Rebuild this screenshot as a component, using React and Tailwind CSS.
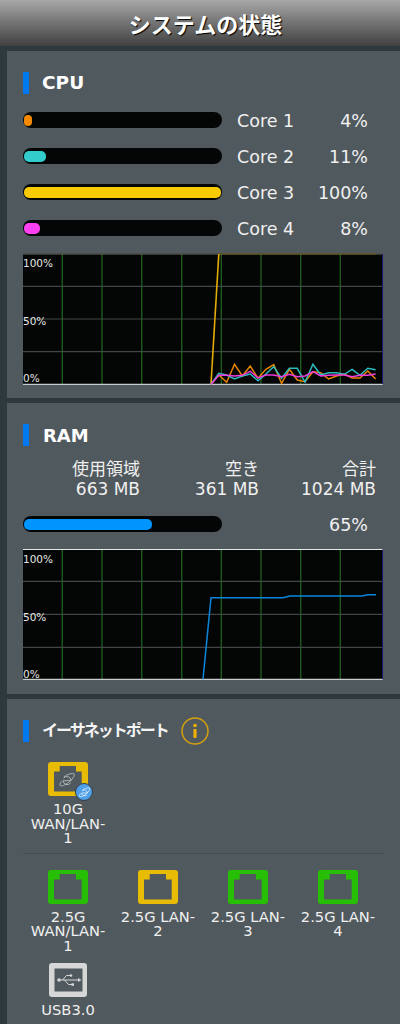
const FONT = 'font-["DejaVu_Sans","Noto_Sans_CJK_JP",sans-serif]';

const cores = [
  { name: "Core 1", pct: "4%", fill: "w-[8px] bg-[#f58a00]" },
  { name: "Core 2", pct: "11%", fill: "w-[22px] bg-[#33cccc]" },
  { name: "Core 3", pct: "100%", fill: "w-[197px] bg-[#f9cb05]" },
  { name: "Core 4", pct: "8%", fill: "w-[16px] bg-[#ff40f0]" },
];

const toPoints = (vals) =>
  vals.map((v, i) => `${188 + i * 7.84},${(v / 3 - 3).toFixed(1)}`).join(" ");

const orange = [403, 375, 397, 343, 378, 348, 385, 358, 344, 400, 358, 390, 395, 365, 368, 387, 378, 372, 384, 384, 363, 387];
const teal = [403, 370, 375, 387, 378, 372, 392, 372, 350, 385, 355, 355, 396, 343, 375, 368, 368, 373, 358, 376, 355, 359];
const magenta = [403, 376, 376, 378, 376, 364, 384, 375, 375, 380, 373, 380, 378, 365, 378, 376, 375, 375, 380, 376, 376, 372];

function Chart({ children, top, lines, topY, bottomY, labelY }) {
  const vx = [39.3, 79, 118.7, 158.7, 198.3, 238, 277.7, 317.3];
  return (
    <svg viewBox="0 0 360 132" className="mt-[17px] block h-[132px] w-[360px]">
      <rect x="0" y={topY - 0.5} width="360" height={bottomY - topY + 0.5} fill="#030605" />
      {vx.map((x) => (
        <line key={x} x1={x} x2={x} y1={topY} y2={bottomY} stroke="#1f5a1c" strokeWidth="1.400" />
      ))}
      {lines.map((y) => (
        <line key={y} x1="0" x2="360" y1={y} y2={y} stroke="#424644" strokeWidth="1.200" />
      ))}
      <line x1="0" x2="360" y1={topY} y2={topY} stroke={top} strokeWidth="1.200" />
      <line x1="0" x2="360" y1={bottomY} y2={bottomY} stroke="#c9cccc" strokeWidth="1.200" />
      <line x1="359.500" x2="359.500" y1={topY} y2={bottomY} stroke="#17176b" strokeWidth="1" />
      {children}
      <g fill="#e6e6e6" fontSize="10.500" fontFamily="'DejaVu Sans', sans-serif">
        <text x="0" y={labelY[0]}>100%</text>
        <text x="0" y={labelY[1]}>50%</text>
        <text x="0" y={labelY[2]}>0%</text>
      </g>
    </svg>
  );
}

function Heading({ children, className }) {
  return (
    <div className="flex h-[22px] items-center">
      <div className="h-[22px] w-[6px] bg-[#0078f0]" />
      <div className={className}>{children}</div>
    </div>
  );
}

function Track({ fill }) {
  return (
    <div className="flex h-4 w-[199px] items-center rounded-full bg-[#030605] pl-px">
      <div className={`h-[11px] rounded-[5px] ${fill}`} />
    </div>
  );
}

function Globe({ color, size }) {
  return (
    <svg viewBox="0 0 20 20" width={size} height={size} fill="none" stroke={color} strokeWidth="1">
      <path d="M5.500 10.800h9a4.800 4.800 0 0 0-8.400-3M5.500 10.800a4.800 4.800 0 0 0 8.500 2.600" />
      <path d="M6.800 6.400C10 3.800 16 2 17.800 3.200c1.200 1-.9 5-4.500 8.200-3.600 3.200-8.400 6-10.600 5-1.200-.7-.3-2.800 1.200-5" />
    </svg>
  );
}

function Port({ color, label, badge }) {
  return (
    <div className="flex w-[90px] flex-col items-center px-[6px]">
      <div className="relative h-[34px] w-10">
        <svg viewBox="0 0 40 34" className="block h-[34px] w-10">
          <path
            fillRule="evenodd"
            fill={color}
            d="M3 0h34a3 3 0 0 1 3 3v28a3 3 0 0 1-3 3H3a3 3 0 0 1-3-3V3a3 3 0 0 1 3-3ZM11.700 4v5.500H6V29.500H33.700V9.500H28V4Z"
          />
        </svg>
        {badge && (
          <>
            <div className="absolute left-[10px] top-[9px]">
              <Globe color="#b9bcbc" size={18} />
            </div>
            <div className="absolute left-[27px] top-[21px] flex h-[18px] w-[18px] items-center justify-center rounded-full border border-[#363f44] bg-[#4d9fe8]">
              <Globe color="#ffffff" size={13} />
            </div>
          </>
        )}
      </div>
      <div className="mt-[6px] text-center text-[14.700px] leading-[14.500px] text-[#f0f0f0]">{label}</div>
    </div>
  );
}

function UsbPort() {
  return (
    <div className="flex w-[90px] flex-col items-center px-[6px]">
      <svg viewBox="0 0 38 34" className="block h-[34px] w-[38px]">
        <path
          fillRule="evenodd"
          fill="#d6d6d6"
          d="M3 0h32a3 3 0 0 1 3 3v28a3 3 0 0 1-3 3H3a3 3 0 0 1-3-3V3a3 3 0 0 1 3-3ZM5.500 5.500V28.500H33.500V5.500Z"
        />
        <g stroke="#d6d6d6" strokeWidth="1" fill="none">
          <line x1="10" y1="17" x2="30" y2="17" />
          <path d="M13.500 17 17.500 12.500H21" />
          <path d="M15.500 17 19.500 21.500H23" />
        </g>
        <g fill="#d6d6d6">
          <circle cx="10" cy="17" r="1.800" />
          <path d="M29 15 32.500 17 29 19Z" />
          <circle cx="22" cy="12.500" r="1.300" />
          <rect x="22.500" y="20.300" width="2.500" height="2.500" />
        </g>
      </svg>
      <div className="mt-[6px] text-center text-[14.700px] leading-[14.500px] text-[#f0f0f0]">USB3.0</div>
    </div>
  );
}

function InfoIcon() {
  return (
    <svg viewBox="0 0 28 28" className="-mt-[4px] -mb-[4px] ml-[13px] h-7 w-7" fill="none">
      <circle cx="14" cy="14" r="13" stroke="#d39f10" strokeWidth="1.500" />
      <circle cx="14" cy="8.500" r="1.800" fill="#eeb000" />
      <rect x="12.400" y="12" width="3.200" height="9" rx="0.800" fill="#eeb000" />
    </svg>
  );
}

export default function App() {
  return (
    <div className={`h-[1024px] w-[400px] overflow-hidden bg-[#2e393e] ${FONT}`}>
      <div className="flex h-[46px] items-center justify-center bg-gradient-to-b from-[#a8a8a8] to-[#424242] pt-[5px] pl-[11px] text-[22px] leading-none font-bold text-white [text-shadow:1px_1px_1px_#000]">
        システムの状態
      </div>

      <div className="mt-[5px] ml-[7px] flex flex-col gap-[5px]">
        <section className="bg-[#50595e] pt-[21px] pr-[17px] pb-[13px] pl-4">
          <Heading className="ml-[13px] text-[18.500px] leading-none font-bold text-white">CPU</Heading>
          <div className="mt-[18px] flex flex-col gap-5">
            {cores.map((c) => (
              <div key={c.name} className="flex h-4 items-center text-[17.500px] text-[#f0f0f0]">
                <Track fill={c.fill} />
                <div className="mt-[3px] ml-[15px] w-[75px]">{c.name}</div>
                <div className="mt-[3px] w-[56px] text-right">{c.pct}</div>
              </div>
            ))}
          </div>
          <Chart top="#6e6f63" lines={[33.3, 66, 98.7]} topY={1} bottomY={131.3} labelY={[14, 72, 129]}>
            <polyline points="195.800,1 353,1" fill="none" stroke="#6a5a12" strokeWidth="1.200" />
            <polyline points="188,131.300 195.800,1" fill="none" stroke="#e3ac07" strokeWidth="1.600" />
            <polyline points={toPoints(orange)} fill="none" stroke="#e88400" strokeWidth="1.500" />
            <polyline points={toPoints(teal)} fill="none" stroke="#2bbcbc" strokeWidth="1.500" />
            <polyline points={toPoints(magenta)} fill="none" stroke="#f03ce0" strokeWidth="1.500" />
          </Chart>
        </section>

        <section className="bg-[#50595e] pt-[21px] pr-[17px] pb-[13px] pl-4">
          <Heading className="mt-px ml-[14px] text-[18px] leading-none font-bold text-white">RAM</Heading>
          <div className="mt-3 grid grid-cols-[117px_119px_117px] pt-px text-right text-[17px] leading-5 text-[#f0f0f0]">
            <div>使用領域</div>
            <div>空き</div>
            <div>合計</div>
            <div>663 MB</div>
            <div>361 MB</div>
            <div>1024 MB</div>
          </div>
          <div className="mt-[17px] flex h-4 items-center text-[17.500px] text-[#f0f0f0]">
            <Track fill="w-[128px] bg-[#0094ff]" />
            <div className="mt-[3px] w-[146px] text-right">65%</div>
          </div>
          <Chart top="#e8e8e8" lines={[32.3, 65.3, 98.3]} topY={0.5} bottomY={130.3} labelY={[13.500, 72, 129]}>
            <polyline points="180,130.300 188,48.700 260,48.700 267,47 339,47 345,45.700 353,45.700" fill="none" stroke="#0a86dc" strokeWidth="1.500" />
          </Chart>
        </section>

        <section className="bg-[#50595e] pt-[21px] pr-[17px] pb-10 pl-4">
          <div className="flex items-center">
            <Heading className="ml-[13px] text-[16px] leading-none font-bold tracking-[-2px] text-[#f4f4f4]">イーサネットポート</Heading>
            <InfoIcon />
          </div>
          <div className="mt-5 flex">
            <Port color="#e8bb05" label="10G WAN/LAN-1" badge />
          </div>
          <div className="mt-[7px] h-px w-[360px] bg-[#424c52]" />
          <div className="mt-4 flex w-[360px] flex-wrap gap-y-[10px]">
            <Port color="#27bf05" label="2.5G WAN/LAN-1" />
            <Port color="#e8bb05" label="2.5G LAN-2" />
            <Port color="#27bf05" label="2.5G LAN-3" />
            <Port color="#27bf05" label="2.5G LAN-4" />
            <UsbPort />
          </div>
        </section>
      </div>
    </div>
  );
}
